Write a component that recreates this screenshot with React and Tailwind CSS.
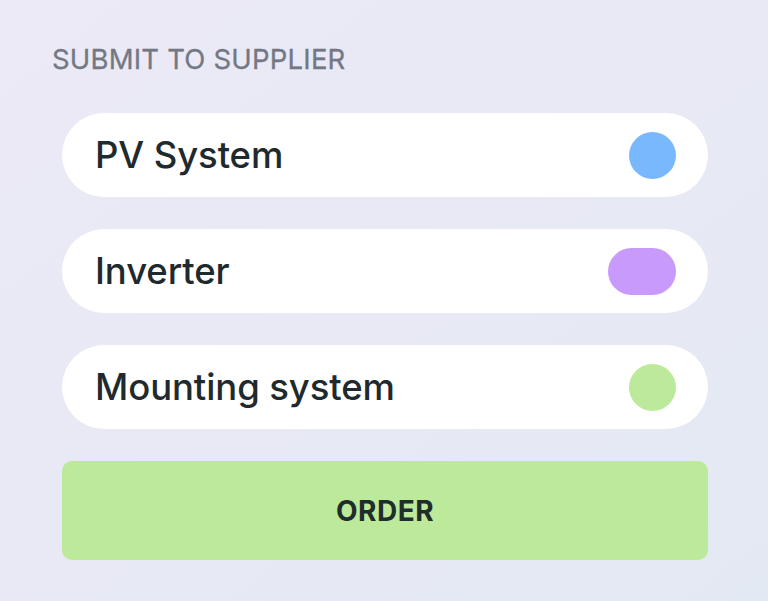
const items = [
  { label: 'PV System', dot: 'w-[47px] bg-[#7ab8fd]' },
  { label: 'Inverter', dot: 'w-[68px] bg-[#c79afc]' },
  { label: 'Mounting system', dot: 'w-[47px] bg-[#bde99a]' },
]

export default function App() {
  return (
    <div className="min-h-screen w-full bg-gradient-to-br from-[#ebeaf6] via-[#e8e9f5] to-[#e3e9f3] font-['Inter',sans-serif]">
      <div className="pl-[52px] pr-[60px] pt-[42px]">
        <h2 className="text-[27.5px] leading-[34px] font-normal tracking-[0.2px] text-[#747884] uppercase [-webkit-text-stroke:0.3px_#747884]">
          Submit to supplier
        </h2>

        <div className="ml-[10px] mt-[37px] flex flex-col gap-[32px]">
          {items.map(item => (
            <div
              key={item.label}
              className="h-[84px] rounded-full bg-white flex items-center justify-between pl-[33px] pr-[32px]"
            >
              <span className="text-[36.5px] font-medium text-[#1f2a2e] tracking-[-0.1px]">
                {item.label}
              </span>
              <span className={`h-[47px] rounded-full ${item.dot}`} />
            </div>
          ))}

          <button className="h-[99px] w-full rounded-[10px] bg-[#bde99a] text-[28px] font-bold text-[#1f2d2d] tracking-[0.5px]">
            ORDER
          </button>
        </div>
      </div>
    </div>
  )
}
